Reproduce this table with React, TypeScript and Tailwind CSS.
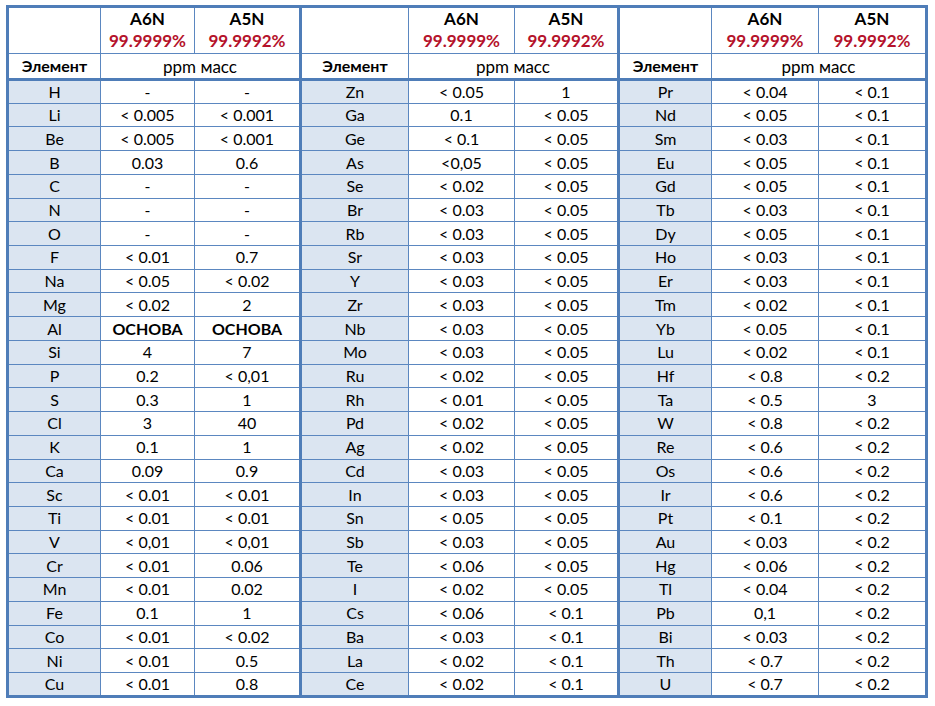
import React from "react";

type Row = [string, string, string];

const group1: Row[] = [
	["H", "-", "-"],
	["Li", "< 0.005", "< 0.001"],
	["Be", "< 0.005", "< 0.001"],
	["B", "0.03", "0.6"],
	["C", "-", "-"],
	["N", "-", "-"],
	["O", "-", "-"],
	["F", "< 0.01", "0.7"],
	["Na", "< 0.05", "< 0.02"],
	["Mg", "< 0.02", "2"],
	["Al", "ОСНОВА", "ОСНОВА"],
	["Si", "4", "7"],
	["P", "0.2", "< 0,01"],
	["S", "0.3", "1"],
	["Cl", "3", "40"],
	["K", "0.1", "1"],
	["Ca", "0.09", "0.9"],
	["Sc", "< 0.01", "< 0.01"],
	["Ti", "< 0.01", "< 0.01"],
	["V", "< 0,01", "< 0,01"],
	["Cr", "< 0.01", "0.06"],
	["Mn", "< 0.01", "0.02"],
	["Fe", "0.1", "1"],
	["Co", "< 0.01", "< 0.02"],
	["Ni", "< 0.01", "0.5"],
	["Cu", "< 0.01", "0.8"],
];

const group2: Row[] = [
	["Zn", "< 0.05", "1"],
	["Ga", "0.1", "< 0.05"],
	["Ge", "< 0.1", "< 0.05"],
	["As", "<0,05", "< 0.05"],
	["Se", "< 0.02", "< 0.05"],
	["Br", "< 0.03", "< 0.05"],
	["Rb", "< 0.03", "< 0.05"],
	["Sr", "< 0.03", "< 0.05"],
	["Y", "< 0.03", "< 0.05"],
	["Zr", "< 0.03", "< 0.05"],
	["Nb", "< 0.03", "< 0.05"],
	["Mo", "< 0.03", "< 0.05"],
	["Ru", "< 0.02", "< 0.05"],
	["Rh", "< 0.01", "< 0.05"],
	["Pd", "< 0.02", "< 0.05"],
	["Ag", "< 0.02", "< 0.05"],
	["Cd", "< 0.03", "< 0.05"],
	["In", "< 0.03", "< 0.05"],
	["Sn", "< 0.05", "< 0.05"],
	["Sb", "< 0.03", "< 0.05"],
	["Te", "< 0.06", "< 0.05"],
	["I", "< 0.02", "< 0.05"],
	["Cs", "< 0.06", "< 0.1"],
	["Ba", "< 0.03", "< 0.1"],
	["La", "< 0.02", "< 0.1"],
	["Ce", "< 0.02", "< 0.1"],
];

const group3: Row[] = [
	["Pr", "< 0.04", "< 0.1"],
	["Nd", "< 0.05", "< 0.1"],
	["Sm", "< 0.03", "< 0.1"],
	["Eu", "< 0.05", "< 0.1"],
	["Gd", "< 0.05", "< 0.1"],
	["Tb", "< 0.03", "< 0.1"],
	["Dy", "< 0.05", "< 0.1"],
	["Ho", "< 0.03", "< 0.1"],
	["Er", "< 0.03", "< 0.1"],
	["Tm", "< 0.02", "< 0.1"],
	["Yb", "< 0.05", "< 0.1"],
	["Lu", "< 0.02", "< 0.1"],
	["Hf", "< 0.8", "< 0.2"],
	["Ta", "< 0.5", "3"],
	["W", "< 0.8", "< 0.2"],
	["Re", "< 0.6", "< 0.2"],
	["Os", "< 0.6", "< 0.2"],
	["Ir", "< 0.6", "< 0.2"],
	["Pt", "< 0.1", "< 0.2"],
	["Au", "< 0.03", "< 0.2"],
	["Hg", "< 0.06", "< 0.2"],
	["Tl", "< 0.04", "< 0.2"],
	["Pb", "0,1", "< 0.2"],
	["Bi", "< 0.03", "< 0.2"],
	["Th", "< 0.7", "< 0.2"],
	["U", "< 0.7", "< 0.2"],
];

const groups = [group1, group2, group3];

const cell = "border border-[#5b87c0] text-center p-0 leading-none";
const elCell = `${cell} bg-[#dbe5f1]`;
const sep = "border-l-[3px] border-l-[#4f7db8]";

export default function App() {
	return (
		<div className="bg-white w-[935px] h-[706px] pt-[5px] pl-[6px] font-['Lato','Noto_Sans',sans-serif] text-black">
			<table className="table-fixed border-collapse border-[3px] border-[#4f7db8] w-[922px]">
				<colgroup>
					<col className="w-[93px]" />
					<col className="w-[94px]" />
					<col className="w-[106px]" />
					<col className="w-[108px]" />
					<col className="w-[106px]" />
					<col className="w-[104px]" />
					<col className="w-[93px]" />
					<col className="w-[107px]" />
					<col className="w-[108px]" />
				</colgroup>
				<thead>
					{/* grades */}
					<tr className="h-[47px]">
						{groups.map((_, g) => (
							<React.Fragment key={g}>
								<td className={`${cell} ${g > 0 ? sep : ""}`} />
								<td className={`${cell} text-[17px] font-bold align-bottom pb-[2px]`}>
									<div className="leading-[22px]">A6N</div>
									<div className="leading-[21px] text-[#b5122b]">99.9999%</div>
								</td>
								<td className={`${cell} text-[17px] font-bold align-bottom pb-[2px]`}>
									<div className="leading-[22px]">A5N</div>
									<div className="leading-[21px] text-[#b5122b]">99.9992%</div>
								</td>
							</React.Fragment>
						))}
					</tr>
					<tr className="h-[26px]">
						{groups.map((_, g) => (
							<React.Fragment key={g}>
								<td
									className={`${cell} border-b-[3px] border-b-[#4f7db8] text-[16px] font-bold ${
										g > 0 ? sep : ""
									}`}
								>
									Элемент
								</td>
								<td colSpan={2} className={`${cell} border-b-[3px] border-b-[#4f7db8] text-[17px]`}>
									ppm масс
								</td>
							</React.Fragment>
						))}
					</tr>
				</thead>
				<tbody>
					{group1.map((_, i) => (
						<tr key={i} className="h-[23.72px]">
							{groups.map((grp, g) => {
								const [el, a6, a5] = grp[i];
								const bold = a6 === "ОСНОВА";
								return (
									<React.Fragment key={g}>
										<td className={`${elCell} text-[16px] ${g > 0 ? sep : ""}`}>{el}</td>
										<td className={`${cell} text-[16px] ${bold ? "font-bold" : ""}`}>{a6}</td>
										<td className={`${cell} text-[16px] ${bold ? "font-bold" : ""}`}>{a5}</td>
									</React.Fragment>
								);
							})}
						</tr>
					))}
				</tbody>
			</table>
		</div>
	);
}
